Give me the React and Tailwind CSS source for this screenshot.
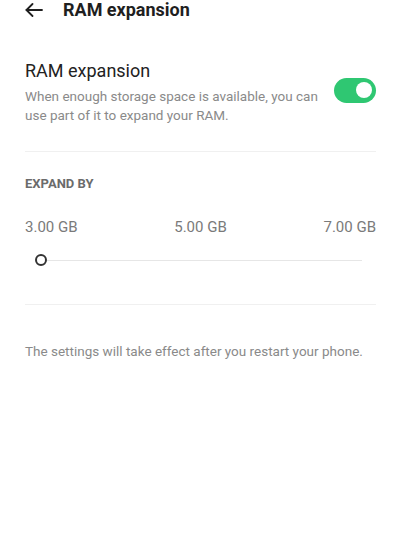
import React, { useState } from 'react';

const App = () => {
  const [enabled, setEnabled] = useState(true);

  return (
    <div className="w-[403px] h-[543px] bg-white overflow-hidden font-['Roboto','Liberation_Sans',sans-serif]">
      {/* 顶部栏 */}
      <div className="h-5 flex items-center pl-[25px]">
        <svg width="18" height="14" viewBox="0 0 18 14" fill="none" stroke="#1f1f1f" strokeWidth="1.8" strokeLinecap="round" strokeLinejoin="round">
          <path d="M17 7H1.5" />
          <path d="M7.5 1L1.5 7l6 6" />
        </svg>
        <span className="ml-[20px] text-[18px] leading-5 font-bold text-[#1f1f1f]">RAM expansion</span>
      </div>

      <div className="pl-[25px] pr-[27px]">
        {/* 开关行 */}
        <div className="mt-[41px] flex items-center">
          <div className="flex-1">
            <div className="text-[18px] leading-5 text-[#222]">RAM expansion</div>
            <p className="mt-[6px] text-[13.5px] leading-[19px] text-[#8a8a8a] pr-4">
              When enough storage space is available, you can use part of it to expand your RAM.
            </p>
          </div>
          <button
            onClick={() => setEnabled(!enabled)}
            className={`-mt-[6px] w-[42px] h-[25px] rounded-full flex items-center px-[4px] ${enabled ? 'bg-[#2fc772] justify-end' : 'bg-[#d9d9d9] justify-start'}`}
          >
            <span className="w-[16px] h-[16px] rounded-full bg-white" />
          </button>
        </div>

        <div className="mt-[26px] h-px bg-[#f0f0f0]" />

        {/* 扩展大小 */}
        <div className="mt-[24px] text-[13px] leading-4 font-bold text-[#6b6b6b]">EXPAND BY</div>

        <div className="mt-[25px] flex justify-between text-[15px] leading-5 text-[#7a7a7a]">
          <span>3.00 GB</span>
          <span>5.00 GB</span>
          <span>7.00 GB</span>
        </div>

        <div className="mt-[17px] h-3 flex items-center pl-[10px] pr-[14px]">
          <span className="w-3 h-3 rounded-full border-2 border-[#333] bg-white shrink-0" />
          <span className="flex-1 h-px bg-[#e6e6e6]" />
        </div>

        <div className="mt-[38px] h-px bg-[#f0f0f0]" />

        <p className="mt-[36px] text-[13.5px] leading-5 text-[#8a8a8a]">
          The settings will take effect after you restart your phone.
        </p>
      </div>
    </div>
  );
};

export default App;
